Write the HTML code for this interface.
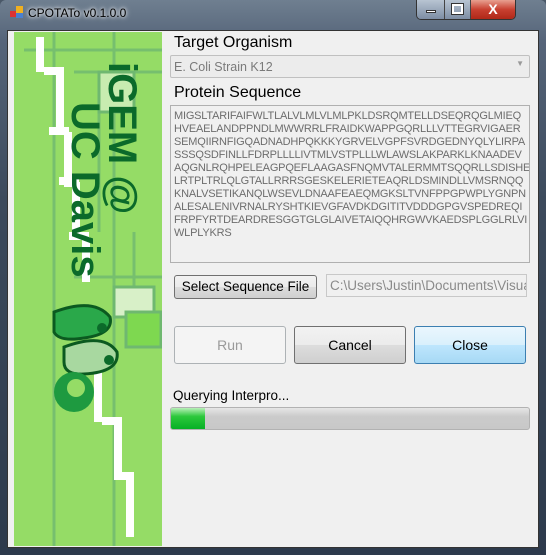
<!DOCTYPE html>
<html><head><style>
*{margin:0;padding:0;box-sizing:border-box}
body{width:546px;height:555px;overflow:hidden;background:#4a5868;font-family:"Liberation Sans",sans-serif;position:relative}
.frame{position:absolute;left:0;top:0;width:546px;height:555px;background:linear-gradient(180deg,#6f7f90 0,#56657a 40px,#3c4a5c 200px,#2d3a4c 555px);border-radius:6px 6px 0 0}
.title{position:absolute;left:28px;top:6px;font-size:12px;color:#000;text-shadow:0 0 6px #fff,0 0 3px #fff}
.client{position:absolute;left:7px;top:30px;width:532px;height:518px;background:#f0f0f0;border:1px solid #333}
.a{position:absolute}
.lbl{font-size:16px;color:#000}
.seq{position:absolute;left:170px;top:105px;width:360px;height:158px;border:1px solid #b0b0b0;background:#f0f0f0;font-size:11px;line-height:13px;color:#6d6d6d;padding:4px 0 0 3px;white-space:pre;overflow:hidden;letter-spacing:-0.2px}
.btn{position:absolute;border:1px solid #707070;border-radius:3px;background:linear-gradient(#f2f2f2 0,#ebebeb 50%,#dddddd 50%,#cfcfcf 100%);font-size:14px;text-align:center;color:#000}
</style></head><body>
<div class="frame"></div>
<div class="a" style="left:10px;top:6px;width:14px;height:13px">
<div class="a" style="left:0;top:5px;width:6px;height:6px;background:#d33"></div>
<div class="a" style="left:6px;top:0;width:7px;height:7px;background:#f0b020"></div>
<div class="a" style="left:6px;top:7px;width:7px;height:5px;background:#4a80d0"></div></div>
<div class="title">CPOTATo v0.1.0.0</div>
<div class="a" style="left:416px;top:0;width:100px;height:20px;border:1px solid #333;border-top:none;border-radius:0 0 5px 5px;overflow:hidden;display:flex">
<div style="width:28px;background:linear-gradient(#b8c4d2,#7d8ea4);border-right:1px solid #444;position:relative"><div class="a" style="left:9px;top:10px;width:10px;height:3px;background:#fff;border:1px solid #333"></div></div>
<div style="width:26px;background:linear-gradient(#b8c4d2,#7d8ea4);border-right:1px solid #444;position:relative"><div class="a" style="left:7px;top:4px;width:11px;height:10px;border:2px solid #fff;outline:1px solid #333"></div></div>
<div style="flex:1;background:linear-gradient(#e8a090,#c84030 50%,#b02818);position:relative;color:#fff;font-weight:bold;font-size:14px;text-align:center;line-height:18px">X</div></div>
<div class="client"></div>
<svg class="a" style="left:14px;top:32px" width="148" height="514" viewBox="0 0 148 514">
<rect x="0" y="0" width="148" height="514" fill="#95dc66"/>
<g stroke="#6fb870" stroke-width="3" fill="none" opacity="0.8">
<path d="M10 18 H148"/><path d="M60 40 H148"/><path d="M85 60 V200"/><path d="M40 0 V514"/><path d="M100 0 V514"/><path d="M60 245 H148"/><path d="M120 200 V300"/>
</g>
<rect x="85" y="40" width="35" height="40" fill="#c8ecb0" stroke="#6fb870" stroke-width="3"/>
<rect x="100" y="255" width="40" height="30" fill="#d8f0c8" stroke="#6fb870" stroke-width="3"/>
<rect x="112" y="280" width="35" height="35" fill="#7ed850" stroke="#6fb870" stroke-width="3"/>
<g fill="#fff">
<rect x="22" y="5" width="8" height="35"/><rect x="30" y="35" width="20" height="8"/><rect x="42" y="40" width="8" height="60"/>
<rect x="35" y="95" width="20" height="8"/><rect x="50" y="100" width="8" height="55"/><rect x="45" y="145" width="20" height="8"/>
<rect x="58" y="150" width="8" height="55"/><rect x="55" y="200" width="20" height="8"/><rect x="68" y="205" width="8" height="45"/>
<rect x="80" y="340" width="8" height="50"/><rect x="88" y="385" width="20" height="8"/><rect x="100" y="390" width="8" height="50"/>
<rect x="100" y="440" width="20" height="8"/><rect x="112" y="445" width="8" height="60"/>
</g>
<text transform="translate(95,30) rotate(90)" font-family="Liberation Sans" font-weight="bold" font-size="40" fill="#0b6a2a">iGEM @</text>
<text transform="translate(58,70) rotate(90)" font-family="Liberation Sans" font-weight="bold" font-size="40" fill="#0b6a2a">UC Davis</text>
<g>
<path d="M40 280 Q80 265 96 285 Q100 302 70 306 Q45 310 40 300Z" fill="#2aa84a" stroke="#0b5a20" stroke-width="3"/>
<path d="M50 315 Q90 300 103 320 Q106 340 70 342 Q50 343 50 330Z" fill="#a8d8a0" stroke="#0b5a20" stroke-width="3"/>
<circle cx="60" cy="360" r="20" fill="#1e9a40"/><circle cx="62" cy="356" r="9" fill="#95dc66"/>
<circle cx="88" cy="296" r="5" fill="#0b6a2a"/><circle cx="95" cy="328" r="5" fill="#0b6a2a"/>
</g>
</svg>
<div class="a lbl" style="left:174px;top:34px">Target Organism</div>
<div class="a" style="left:170px;top:55px;width:360px;height:23px;border:1px solid #c0c0c0;border-radius:2px;background:#ececec;font-size:12.5px;color:#7a7a7a;padding:4px 0 0 3px">E. Coli Strain K12<span class="a" style="right:5px;top:3px;font-size:8px;color:#999">▼</span></div>
<div class="a lbl" style="left:174px;top:84px">Protein Sequence</div>
<div class="seq">MIGSLTARIFAIFWLTLALVLMLVLMLPKLDSRQMTELLDSEQRQGLMIEQ
HVEAELANDPPNDLMWWRRLFRAIDKWAPPGQRLLLVTTEGRVIGAER
SEMQIIRNFIGQADNADHPQKKKYGRVELVGPFSVRDGEDNYQLYLIRPA
SSSQSDFINLLFDRPLLLLIVTMLVSTPLLLWLAWSLAKPARKLKNAADEV
AQGNLRQHPELEAGPQEFLAAGASFNQMVTALERMMTSQQRLLSDISHE
LRTPLTRLQLGTALLRRRSGESKELERIETEAQRLDSMINDLLVMSRNQQ
KNALVSETIKANQLWSEVLDNAAFEAEQMGKSLTVNFPPGPWPLYGNPN
ALESALENIVRNALRYSHTKIEVGFAVDKDGITITVDDDGPGVSPEDREQI
FRPFYRTDEARDRESGGTGLGLAIVETAIQQHRGWVKAEDSPLGGLRLVI
WLPLYKRS</div>
<div class="btn" style="left:174px;top:275px;width:143px;height:24px;line-height:22px;font-size:13.5px">Select Sequence File</div>
<div class="a" style="left:326px;top:274px;width:201px;height:23px;border:1px solid #c8c8c8;background:#f0f0f0;font-size:13.5px;color:#8a8a8a;padding:3px 0 0 3px;white-space:nowrap;overflow:hidden">C:\Users\Justin\Documents\Visual</div>
<div class="btn" style="left:174px;top:326px;width:112px;height:38px;line-height:36px;background:#f4f4f4;border-color:#adb2b5;color:#9a9a9a">Run</div>
<div class="btn" style="left:294px;top:326px;width:112px;height:38px;line-height:36px">Cancel</div>
<div class="btn" style="left:414px;top:326px;width:112px;height:38px;line-height:36px;border-color:#3c7fb1;background:linear-gradient(#eaf6fd 0,#d9f0fc 50%,#bee6fd 50%,#a7d9f5 100%)">Close</div>
<div class="a" style="left:173px;top:388px;font-size:13.5px">Querying Interpro...</div>
<div class="a" style="left:170px;top:407px;width:360px;height:23px;border:1px solid #b2b2b2;border-radius:3px;background:linear-gradient(#e6e6e6,#cbcbcb 40%,#c8c8c8);overflow:hidden">
<div style="width:34px;height:100%;background:linear-gradient(#b8f0b8 0,#2cc83c 40%,#06b025 100%)"></div></div>
</body></html>
